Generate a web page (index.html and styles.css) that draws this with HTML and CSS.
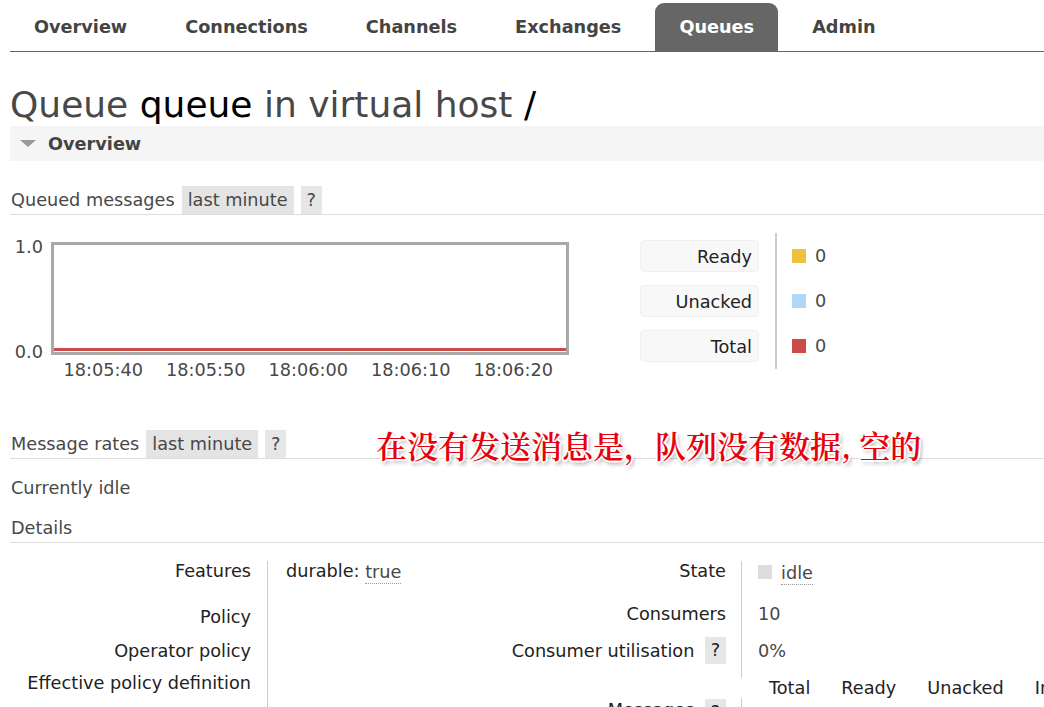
FILE: index.html
```html
<!DOCTYPE html>
<html lang="en">
<head>
<meta charset="utf-8">
<title>Queue queue</title>
<link rel="stylesheet" href="styles.css">
</head>
<body>
<nav class="tabs">
  <a class="tab">Overview</a>
  <a class="tab">Connections</a>
  <a class="tab">Channels</a>
  <a class="tab">Exchanges</a>
  <a class="tab active">Queues</a>
  <a class="tab">Admin</a>
</nav>
<main class="page">
  <h1 class="title">Queue <b>queue</b> in virtual host <b>/</b></h1>
  <div class="section-head"><span class="tri"></span>Overview</div>

  <div class="subhead">Queued messages <span class="pill">last minute</span><span class="help">?</span></div>

  <div class="chart-row">
    <div class="chart">
      <div class="yaxis"><span>1.0</span><span>0.0</span></div>
      <div class="plot-col">
        <div class="plot"><div class="series"></div></div>
        <div class="xaxis">
          <span>18:05:40</span><span>18:05:50</span><span>18:06:00</span><span>18:06:10</span><span>18:06:20</span>
        </div>
      </div>
    </div>
    <div class="legend">
      <div class="legend-labels">
        <div class="lbl">Ready</div>
        <div class="lbl">Unacked</div>
        <div class="lbl">Total</div>
      </div>
      <div class="legend-values">
        <div class="val"><span class="sw ready"></span>0</div>
        <div class="val"><span class="sw unacked"></span>0</div>
        <div class="val"><span class="sw total"></span>0</div>
      </div>
    </div>
  </div>

  <div class="subhead rates">Message rates <span class="pill">last minute</span><span class="help">?</span></div>
  <div class="note">在没有发送消息是，队列没有数据, 空的</div>

  <p class="idle">Currently idle</p>

  <div class="subhead details-head">Details</div>

  <div class="details">
    <div class="dtable left">
      <div class="row r1"><div class="th">Features</div><div class="td"><span class="key">durable:</span> <abbr class="dotted">true</abbr></div></div>
      <div class="row r2"><div class="th">Policy</div><div class="td"></div></div>
      <div class="row r3"><div class="th">Operator policy</div><div class="td"></div></div>
      <div class="row r4"><div class="th">Effective policy definition</div><div class="td"></div></div>
    </div>
    <div class="dtable mid">
      <div class="row m1"><div class="th">State</div><div class="td"><span class="state-box"></span><abbr class="dotted">idle</abbr></div></div>
      <div class="row m2"><div class="th">Consumers</div><div class="td">10</div></div>
      <div class="row m3"><div class="th">Consumer utilisation <span class="help">?</span></div><div class="td">0%</div></div>
      <div class="row m4"><div class="th noline"></div><div class="td mini"><span>Total</span><span>Ready</span><span>Unacked</span><span>In memory</span><span>Persistent</span></div></div>
      <div class="row m5"><div class="th">Messages <span class="help">?</span></div><div class="td"></div></div>
    </div>
  </div>
</main>
</body>
</html>
```

FILE: styles.css
```css
html, body {
  margin: 0;
  padding: 0;
  overflow: hidden;
  background: #fff;
}
body {
  font-family: "DejaVu Sans", Verdana, sans-serif;
  font-size: 17.7px;
  color: #484848;
  width: 1044px;
  height: 707px;
  position: relative;
}

/* nav tabs */
.tabs {
  display: flex;
  margin-left: 10px;
  padding-top: 3px;
  border-bottom: 1px solid #666;
}
.tab {
  display: block;
  height: 48px;
  line-height: 48px;
  padding: 0 24px;
  margin-right: 10px;
  font-weight: bold;
  color: #444;
  border-radius: 9px 9px 0 0;
}
.tab.active {
  background: #666;
  color: #fff;
}

.page {
  padding-left: 10px;
}

.title {
  margin: 32px 0 0;
  font-size: 36px;
  line-height: 42px;
  font-weight: normal;
  color: #484848;
}
.title b {
  font-weight: normal;
  color: #000;
}

.section-head {
  display: flex;
  align-items: center;
  height: 35px;
  background: #f5f5f5;
  padding-left: 10px;
  font-weight: bold;
  color: #444;
}
.tri {
  width: 0;
  height: 0;
  border-left: 8px solid transparent;
  border-right: 8px solid transparent;
  border-top: 7px solid #999;
  margin-right: 12px;
}

.subhead {
  display: flex;
  align-items: center;
  height: 28px;
  line-height: 28px;
  margin-top: 25px;
  border-bottom: 1px solid #ddd;
  padding-left: 1px;
}
.pill {
  background: #e4e4e4;
  padding: 0 6px;
  margin-left: 7px;
  height: 28px;
}
.help {
  display: inline-block;
  background: #e6e6e6;
  width: 21px;
  text-align: center;
  margin-left: 7px;
  height: 28px;
  line-height: 28px;
}

/* chart */
.chart-row {
  display: flex;
  margin-top: 18px;
}
.chart {
  display: flex;
  margin-top: 9px;
}
.yaxis {
  width: 33px;
  height: 121px;
  margin-top: -3px;
  display: flex;
  flex-direction: column;
  justify-content: space-between;
  align-items: flex-end;
  padding-right: 8px;
  line-height: 16px;
}
.plot {
  width: 512px;
  height: 107px;
  border: 3px solid #a9a9a9;
  position: relative;
  display: flex;
  align-items: flex-end;
}
.series {
  height: 3px;
  width: 100%;
  background: #cb4b4b;
  margin-bottom: 1px;
}
.xaxis {
  display: flex;
  padding-left: 1px;
  margin-top: 5px;
  line-height: 20px;
}
.xaxis span {
  width: 102.5px;
  text-align: center;
}

.legend {
  display: flex;
  margin-left: 71px;
}
.legend-labels {
  padding-top: 7px;
  display: flex;
  flex-direction: column;
  gap: 13px;
}
.lbl {
  width: 111px;
  height: 30px;
  line-height: 32px;
  text-align: right;
  padding-right: 6px;
  background: #f8f8f8;
  border: 1px solid #f0f0f0;
  border-radius: 4px;
  color: #222;
}
.legend-values {
  margin-left: 16px;
  border-left: 2px solid #ccc;
  padding: 7px 0 7px 15px;
  display: flex;
  flex-direction: column;
  gap: 13px;
  height: 122px;
}
.val {
  height: 32px;
  line-height: 32px;
  display: flex;
  align-items: center;
}
.sw {
  width: 14px;
  height: 14px;
  margin-right: 9px;
}
.sw.ready { background: #edc240; }
.sw.unacked { background: #afd8f8; }
.sw.total { background: #cb4b4b; }

.subhead.rates {
  margin-top: 50px;
}

.note {
  position: absolute;
  left: 376px;
  top: 427px;
  font-family: "Noto Serif CJK SC", "Noto Sans CJK SC", sans-serif;
  font-size: 31px;
  line-height: 36px;
  font-weight: 600;
  color: #e8000b;
  white-space: nowrap;
  text-shadow:
    -1px -1px 0 #fff, 1px -1px 0 #fff, -1px 1px 0 #fff, 1px 1px 0 #fff,
    -2px 0 0 #fff, 2px 0 0 #fff, 0 -2px 0 #fff, 0 2px 0 #fff,
    2px 3px 4px rgba(0,0,0,0.45);
}

.idle {
  margin: 19px 0 0 1px;
  line-height: 20px;
}
.subhead.details-head {
  margin-top: 16px;
  height: 28px;
}

/* details tables */
.details {
  display: flex;
  margin-top: 18px;
}
.dtable .row {
  display: flex;
}
.th {
  text-align: right;
  color: #222;
  line-height: 20px;
  border-right: 1px solid #ccc;
  box-sizing: border-box;
}
.td {
  line-height: 20px;
}
.left .th { width: 258px; padding-right: 16px; }
.left .td { width: 223px; padding-left: 18px; box-sizing: border-box; }
.left .r1 { height: 46px; }
.left .r2 { height: 34px; }
.left .r3 { height: 32px; }
.left .r4 { height: 60px; }
.key { color: #222; }
.dotted {
  text-decoration: none;
  border-bottom: 1px dotted #999;
  padding-bottom: 1px;
}
.left .dotted { position: relative; top: 1px; }

.mid .th { width: 251px; padding-right: 15px; }
.mid .td { padding-left: 16px; display: flex; align-items: flex-start; }
.mid .m1 { height: 43px; }
.mid .m2 { height: 37px; }
.mid .m3 { height: 37px; }
.mid .m4 { height: 20px; }
.mid .m5 { height: 40px; }
.mid .th .help {
  height: 27px;
  line-height: 27px;
  margin-left: 5px;
  margin-top: -4px;
  vertical-align: top;
}
.th.noline { border-right: none; }
.state-box {
  display: inline-block;
  width: 14px;
  height: 14px;
  background: #ddd;
  margin: 4px 9px 0 0;
}
.m1 .dotted { position: relative; top: 2px; }
.mini {
  gap: 31px;
  padding-left: 27px !important;
  white-space: nowrap;
  color: #222;
}
.m5 .th { padding-top: 2px; }
.m5 .th .help { margin-top: -1px; }
```
